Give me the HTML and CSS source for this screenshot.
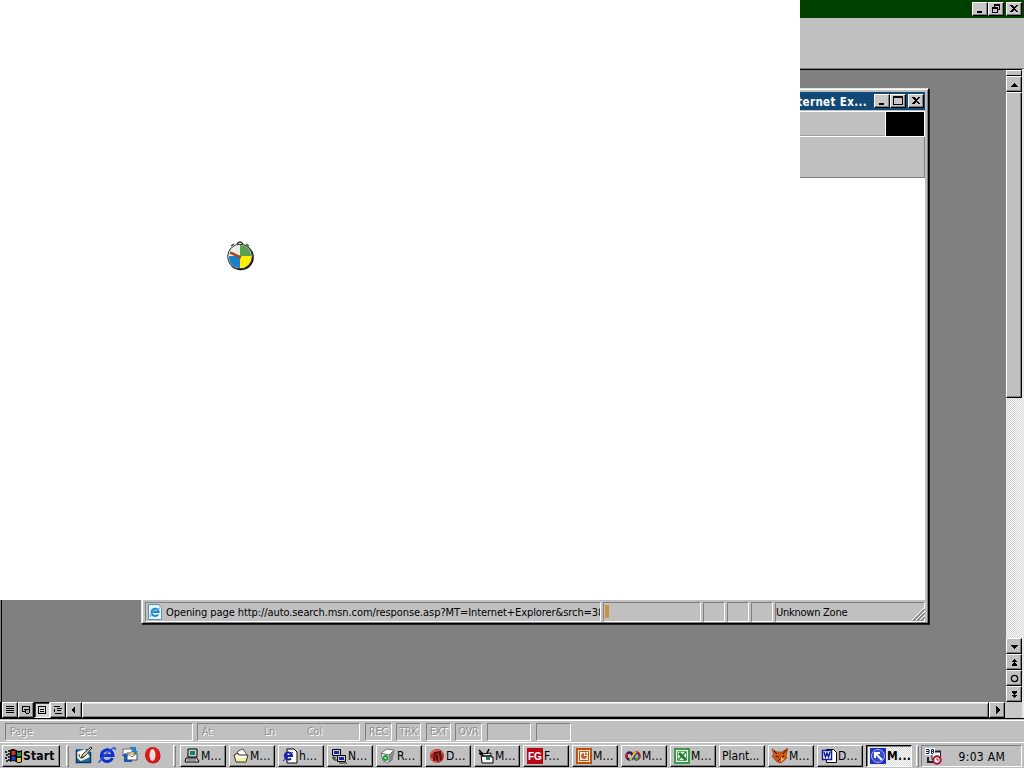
FILE: index.html
```html
<!DOCTYPE html>
<html lang="en">
<head>
    <meta charset="UTF-8">
    <title>Desktop</title>
    <link rel="stylesheet" href="styles.css">
</head>
<body>

<div class="desktop">
    <!-- Main window title bar -->
    <div class="titlebar">
        <div class="btn"><svg width="10" height="10"><path d="M2 8h5" stroke="#000" stroke-width="2"/></svg></div>
        <div class="btn"><svg width="10" height="10"><path d="M3 0h6v6H7V5h1V2H4v1H3zM1 3h6v6H1zM2 5v3h4V5z" fill-rule="evenodd"/></svg></div>
        <div class="btn close"><svg width="10" height="10"><path d="M1 1h2l2 2 2-2h2L6 4.500 9 8H7L5 6 3 8H1l3-3.500z"/></svg></div>
    </div>
    <div class="toolbar"></div>

    <div class="workspace">
        <div class="canvas"></div>
        <div class="vscroll">
            <div class="split"></div>
            <div class="arrow"><svg width="9" height="9"><path d="M0 7h8L4 3z"/></svg></div>
            <div class="vthumb"></div>
            <div class="vtrack"></div>
            <div class="arrow"><svg width="9" height="9"><path d="M0 3h8L4 7z"/></svg></div>
            <div class="arrow"><svg width="9" height="9"><path d="M2 4h5L4.500 1zM2 7h5L4.500 4zM2 7h5v1H2z"/></svg></div>
            <div class="arrow"><svg class="smooth" width="9" height="9"><circle cx="4.500" cy="4.500" r="3.200" fill="none" stroke="#000" stroke-width="1.300"/></svg></div>
            <div class="arrow"><svg width="9" height="9"><path d="M2 1h5v1H2zM2 2h5L4.500 5zM2 5h5L4.500 8z"/></svg></div>
        </div>
    </div>

    <div class="hscroll">
        <div class="view"><svg width="10" height="10"><path d="M1 1.500h8M1 3.500h8M1 5.500h8M1 7.500h8" stroke="#000"/></svg></div>
        <div class="view"><svg width="10" height="10"><path d="M1.500 1.500h7v5h-7zM3 4h3" fill="none" stroke="#000"/><circle cx="6.500" cy="6.500" r="2" fill="#aaa" stroke="#000"/></svg></div>
        <div class="view pressed"><svg width="10" height="10"><path d="M1.500 1.500h7v7h-7zM3 4.500h4M3 6.500h4" fill="none" stroke="#000"/></svg></div>
        <div class="view"><svg width="10" height="10"><path d="M1 1.500h6M4 3.500h5M4 5.500h4M2 8.500h7M1.500 4v3" stroke="#000"/></svg></div>
        <div class="view left"><svg width="9" height="9"><path d="M6 0v8L2 4z"/></svg></div>
        <div class="hthumb"></div>
        <div class="view last"><svg width="9" height="9"><path d="M3 0v8l4-4z"/></svg></div>
        <div class="corner"></div>
    </div>

    <!-- Word status bar -->
    <div class="statusbar">
        <div class="cell page"><span class="c-page">Page</span><span>Sec</span></div>
        <div class="cell pos"><span class="c-at">At</span><span class="c-ln">Ln</span><span>Col</span></div>
        <div class="cell mode m1">REC</div>
        <div class="cell mode m2">TRK</div>
        <div class="cell mode m3">EXT</div>
        <div class="cell mode m4">OVR</div>
        <div class="cell e1"></div>
        <div class="cell e2"></div>
    </div>

    <!-- Taskbar -->
    <div class="taskbar">
        <div class="start">
            <svg width="18" height="16" viewBox="0 0 18 16"><path d="M0 4h2M1 7h2M0 10h2M1 13h2M3 3h2M3 6h2M3 9h2M3 12h2" stroke="#000" stroke-width="1.500"/><path d="M5 2q3-2 6 0t6 0v12q-3 2-6 0t-6 0z" fill="#000"/><path d="M6.500 3q2-1 4 .3v4q-2-1-4 0z" fill="#e03020"/><path d="M12 4q2 1 4 0v4q-2 1-4 0z" fill="#20a040"/><path d="M6.500 8.500q2-1 4 .3v4q-2-1-4 0z" fill="#2040d0"/><path d="M12 9.500q2 1 4 0v4q-2 1-4 0z" fill="#f0d020"/></svg>
            <span>Start</span>
        </div>
        <div class="grip g1"></div>
        <div class="quick">
            <svg width="18" height="18" viewBox="0 0 18 18"><path d="M1 3h14v13H1z" fill="#2070a8"/><path d="M2 6l8-3 5 8-9 4-4-3z" fill="#fffbe8"/><path d="M1.500 4v12.500h14V6" fill="none" stroke="#103858" stroke-width="1.500"/><path d="M6 12l2-4 8-7 1 1-7 8z" fill="#e8e0c0" stroke="#222"/><path d="M4 8q0 6 5 3" fill="none" stroke="#333"/></svg>
            <svg width="18" height="18" viewBox="0 0 18 18"><path d="M14.500 12A5.800 5.800 0 1 1 15 9.500H5" fill="none" stroke="#1030d0" stroke-width="3"/><path d="M2 15C-1 19 4 12 9 7s9-7 8-3" fill="none" stroke="#2850e0" stroke-width="1.500"/></svg>
            <svg width="18" height="18" viewBox="0 0 18 18"><path d="M2 3h9v7H2z" fill="#fff" stroke="#667"/><path d="M6 7h10v7H6z" fill="#fff" stroke="#445"/><path d="M6 7l5 4 5-4" fill="none" stroke="#778"/><path d="M9 1h6v4h2l-3 4-4-4h2V3H9z" fill="#2080d0"/><path d="M1 10l3-3 4 3H6v4h5v2H3v-6z" fill="#1858b0"/><path d="M10 6h3v3h-3z" fill="#f0c030"/></svg>
            <svg width="18" height="18" viewBox="0 0 18 18"><ellipse cx="9" cy="9.500" rx="7.500" ry="8" fill="#a00808"/><ellipse cx="8.500" cy="9" rx="7.500" ry="8" fill="#e01818"/><ellipse cx="8.500" cy="9" rx="3" ry="6" fill="#e0e0e0"/></svg>
        </div>
        <div class="grip g2"></div>
        <div class="tasks">
            <div class="task"><svg width="16" height="16"><path d="M4 1h9v8H4z" fill="#ccc" stroke="#000"/><path d="M6 3h5v4H6z" fill="#108070"/><path d="M2 10h11l2 4H1z" fill="#ddd" stroke="#000"/><path d="M3 12h9" stroke="#555"/></svg>M...</div>
            <div class="task"><svg width="16" height="16"><path d="M3 7l2-4 5-2 4 6" fill="#fff" stroke="#555"/><path d="M1 7l4-2 1 2h9l-2 7H3z" fill="#f8f0a0" stroke="#333"/><path d="M3 9h10" stroke="#fff" stroke-width="2"/></svg>M...</div>
            <div class="task"><svg width="16" height="16"><path d="M5 1h7l3 3v11H5z" fill="#fff" stroke="#000"/><path d="M9 10.500A3.600 3.600 0 1 1 10 8H4" fill="none" stroke="#1020b0" stroke-width="2"/><path d="M1 13L11 4" stroke="#1020b0"/></svg>h...</div>
            <div class="task"><svg width="16" height="16"><path d="M1.500 1.500h8v6h-8zM6.500 7.500h8v6h-8z" fill="#ccc" stroke="#000"/><path d="M3 3h5v3H3zM8 9h5v3H8z" fill="#1030a0"/><path d="M1 10h4M3 8v4h3M8 15h8" stroke="#222" fill="none"/></svg>N...</div>
            <div class="task"><svg width="16" height="16"><path d="M1 5l8 2 5-5-2 10-4 3-5-2z" fill="#e8ece8" stroke="#777"/><path d="M1 5l6-4 7 1-5 5z" fill="#fff" stroke="#777"/><path d="M9 7l-1 8 4-3 2-10z" fill="#888"/><circle cx="5.500" cy="10" r="2" fill="none" stroke="#10a030" stroke-width="1.800"/></svg>R...</div>
            <div class="task"><svg width="16" height="16"><circle cx="8" cy="8" r="7" fill="#b03028"/><path d="M2 5q5-5 11 0M2 10q2 4 6 4" fill="none" stroke="#d86858" stroke-width="2"/><path d="M5 13l1-8 5-1 1 8M8 7v6" fill="none" stroke="#601010" stroke-width="2"/></svg>D...</div>
            <div class="task"><svg width="16" height="16"><path d="M3 6l10-1v4h2v6H4z" fill="#f4f4f4" stroke="#000"/><path d="M1 2l4 4M1 5l4 2M9 5l2-4M4 8h9" stroke="#000" stroke-width="1.500"/><path d="M8 9h4v3H8z" fill="#208070"/></svg>M...</div>
            <div class="task"><svg class="fg" width="16" height="16"><path d="M0 0h16v16H0z" fill="#b80818"/><text x="1" y="12">FG</text></svg>F...</div>
            <div class="task"><svg width="16" height="16"><path d="M1 1h14v14H1z" fill="#fff0e0" stroke="#c05010" stroke-width="2"/><path d="M3.500 3.500h9v9h-9z" fill="none" stroke="#c05010"/><path d="M8 5a3 3 0 1 0 3 3H8zM9 4v3h3" fill="#d06020"/></svg>M...</div>
            <div class="task"><svg width="16" height="16"><ellipse cx="4.500" cy="8" rx="3" ry="3.500" fill="none" stroke="#202060" stroke-width="2.500"/><ellipse cx="11.500" cy="8" rx="3" ry="3.500" fill="none" stroke="#a02020" stroke-width="2.500"/><path d="M2 5q-1 3 0 5" fill="none" stroke="#d02020" stroke-width="2"/><path d="M5 12l6-8" stroke="#f0c020" stroke-width="2.500"/><path d="M7 12l5-7" stroke="#2050c0" stroke-width="1.500"/><path d="M10 11.500q3 0 4-3" fill="none" stroke="#20a040" stroke-width="2"/></svg>M...</div>
            <div class="task"><svg width="16" height="16"><path d="M1 1h14v14H1z" fill="#e8f8e8" stroke="#409850" stroke-width="2"/><path d="M3.500 3.500h9v9h-9z" fill="none" stroke="#60a860"/><path d="M5 5l7 7" stroke="#208030" stroke-width="3"/><path d="M12 4l-8 8" stroke="#208030" stroke-width="1.500"/></svg>M...</div>
            <div class="task plain">Plant...</div>
            <div class="task"><svg width="16" height="16"><path d="M0 1l5 3h5l6-4-2 8 1 2-6 5-4-1-5-6 2-1z" fill="#d05810" stroke="#803000" stroke-width=".6"/><path d="M2 3l3 3M14 2l-3 4M4 8l3 1M12 8l-2 1M6 13l3-3" stroke="#301000"/><path d="M9 9l3 2-3 3z" fill="#ffc060"/></svg>M...</div>
            <div class="task"><svg width="16" height="16"><path d="M5.500 1.500h7l3 3v10h-10z" fill="#fff" stroke="#000"/><path d="M1.500 2.500h9v9h-9z" fill="#fff" stroke="#102090" stroke-width="1.500"/><path d="M3 4l1.500 5L6 5l1.500 4L9 4" fill="none" stroke="#102090" stroke-width="1.500"/></svg>D...</div>
            <div class="task active"><svg width="16" height="16"><path d="M0 0h16v16H0z" fill="#2030c0"/><circle cx="8" cy="8" r="6.500" fill="#3048d0" stroke="#aab4f0"/><path d="M12 12L5 5M5 10V5h5" fill="none" stroke="#fff" stroke-width="2"/></svg>M...</div>
        </div>
        <div class="grip g3"></div>
        <div class="tray">
            <svg width="17" height="17"><path d="M0 0h10v7H0z" fill="#fff"/><path d="M1 1.500h3v4H1M1 3.500h3M6.500 1.500h2v4h-2zM6 3.500h3" fill="none" stroke="#102060"/><path d="M10 3.500h5.500v8H7V7" fill="#fff" stroke="#222"/><path d="M10 3.500h6M3 9v5h6" stroke="#222" stroke-width="2" fill="none"/><circle cx="12" cy="12" r="3.700" fill="#fff" stroke="#b01030" stroke-width="2"/><path d="M12 10v2h2" fill="none" stroke="#b01030"/></svg>
            <span>9:03 AM</span>
        </div>
    </div>
</div>

<!-- Internet Explorer window -->
<div class="ie">
    <div class="ie-title">
        <span>Internet Ex...</span>
        <div class="btn"><svg width="10" height="10"><path d="M2 8h5" stroke="#000" stroke-width="2"/></svg></div>
        <div class="btn"><svg width="10" height="10"><path d="M0 0h10v9H0zM1 2v6h8V2z" fill-rule="evenodd"/></svg></div>
        <div class="btn close"><svg width="10" height="10"><path d="M1 1h2l2 2 2-2h2L6 4.500 9 8H7L5 6 3 8H1l3-3.500z"/></svg></div>
    </div>
    <div class="ie-menu"><div class="throbber"></div></div>
    <div class="ie-tools"></div>
    <div class="ie-page"></div>
    <div class="ie-status">
        <div class="pane msg">
            <svg width="16" height="16"><path d="M1.500.5h10l3 3v12h-13z" fill="#e8f4fc" stroke="#5890b8"/><path d="M11 10.500A3.600 3.600 0 1 1 11.700 8H5" fill="none" stroke="#2088c8" stroke-width="2"/><path d="M3 13q1-6 10-9" fill="none" stroke="#50b0e0"/></svg>
            <span>Opening page http://auto.search.msn.com/response.asp?MT=Internet+Explorer&amp;srch=38</span>
        </div>
        <div class="pane progress"><i></i></div>
        <div class="pane small"></div>
        <div class="pane small"></div>
        <div class="pane small"></div>
        <div class="pane zone">Unknown Zone</div>
        <svg class="sizegrip" width="13" height="13"><path d="M1 13L13 1M5 13l8-8M9 13l4-4" stroke="#808080" stroke-width="1.500"/><path d="M0 12L12 0M4 12l8-8M8 12l4-4" stroke="#fff"/></svg>
    </div>
</div>

<!-- Blank splash area with the busy cursor -->
<div class="splash">
    <svg class="busy" width="30" height="32" viewBox="0 0 30 32">
        <path d="M6 6l3-2M21 4l3 2M12 4q3-4 6 0" fill="none" stroke="#444" stroke-width="1.500"/>
        <circle cx="15.800" cy="17.300" r="13" fill="#111"/>
        <circle cx="15" cy="16.500" r="12.300" fill="#e4e8e0" stroke="#333"/>
        <path d="M15 16V5a11 11 0 0 1 11 11z" fill="#58a050"/>
        <path d="M15 16h11a11 11 0 0 1-11 12z" fill="#ffee00"/>
        <path d="M15 16v12A11 11 0 0 1 4 16z" fill="#1880c8"/>
        <path d="M15 16H4A11 11 0 0 1 15 5z" fill="#e8eee8"/>
        <path d="M16 17.500L5 12.500" stroke="#a84818" stroke-width="2.500"/>
    </svg>
</div>

</body>
</html>
```
FILE: styles.css
```css
* {
    box-sizing: border-box;
}
body {
    margin: 0;
    width: 1024px;
    height: 768px;
    overflow: hidden;
    position: relative;
    background: #c0c0c0;
    font-family: "DejaVu Sans Condensed", "DejaVu Sans", sans-serif;
    font-size: 11px;
    color: #000;
}
svg {
    display: block;
    flex: none;
}
.desktop {
    display: flex;
    flex-direction: column;
    height: 768px;
}

/* title bar buttons */
.titlebar {
    height: 18px;
    background: #004000;
    display: flex;
    justify-content: flex-end;
    padding: 2px 2px 0 0;
}
.btn {
    width: 16px;
    height: 14px;
    background: #c8c8c8;
    border: 1px solid;
    border-color: #fff #000 #000 #fff;
    box-shadow: inset -1px -1px #808080;
    padding: 1px 2px;
}
.btn svg, .arrow svg, .view svg {
    shape-rendering: crispEdges;
}
.arrow svg.smooth {
    shape-rendering: auto;
}
.btn.close {
    margin-left: 2px;
}
.toolbar {
    height: 51px;
    background: #c0c0c0;
    border-bottom: 1px solid #808080;
}

/* document area */
.workspace {
    height: 633px;
    display: flex;
    padding-right: 2px;
    background: #e8e8e8;
}
.canvas {
    flex: 1;
    background: #808080;
    border-left: 1px solid #808080;
    border-top: 1px solid #000;
    box-shadow: inset 1px 0 #000;
}
.vscroll {
    width: 16px;
    display: flex;
    flex-direction: column;
    border-top: 1px solid #000;
}
.split, .arrow, .vthumb, .view, .hthumb {
    background: #c0c0c0;
    border: 1px solid;
    border-color: #fff #000 #000 #fff;
}
.split {
    height: 6px;
}
.arrow {
    height: 16px;
    display: flex;
    align-items: center;
    justify-content: center;
    box-shadow: inset -1px -1px #808080;
}
.vthumb {
    height: 306px;
    box-shadow: inset -1px -1px #808080;
}
.vtrack {
    flex: 1;
    background: repeating-conic-gradient(#fff 0 25%, #d0d0d0 0 50%) 0 0 / 2px 2px;
}
.hscroll {
    height: 17px;
    display: flex;
    padding-left: 2px;
    border-bottom: 1px solid #000;
    box-shadow: inset 2px 0 #000;
}
.view {
    width: 16px;
    display: flex;
    align-items: center;
    justify-content: center;
    box-shadow: inset -1px -1px #808080;
}
.view.left {
    padding-right: 2px;
}
.view.pressed {
    border-color: #000 #fff #fff #000;
    box-shadow: inset 1px 1px #404040;
    background: #d8d8d8;
}
.hthumb {
    flex: 1;
    border-top-color: #fff;
    box-shadow: inset 0 1px #e0e0e0, inset -1px -1px #808080;
}
.corner {
    width: 19px;
    background: #c8c8c8;
    border-right: 2px solid #e8e8e8;
}

/* status bar */
.statusbar {
    height: 22px;
    margin-top: 1px;
    border-top: 1px solid #fff;
    display: flex;
    padding: 2px 0 1px 5px;
    color: #909090;
    text-shadow: 1px 1px #fff;
    font-size: 10.500px;
}
.cell {
    border: 1px solid;
    border-color: #808080 #fff #fff #808080;
    height: 18px;
    line-height: 15px;
    display: flex;
}
.page {
    width: 188px;
    padding-left: 4px;
}
.c-page {
    width: 69px;
}
.pos {
    width: 163px;
    margin-left: 4px;
    padding-left: 4px;
}
.c-at {
    width: 62px;
}
.c-ln {
    width: 43px;
}
.mode {
    width: 27px;
    margin-left: 4px;
    justify-content: center;
    letter-spacing: -0.100px;
}
.m1, .m3 {
    margin-left: 5px;
}
.m2, .m3 {
    width: 25px;
}
.e1 {
    width: 44px;
    margin-left: 5px;
}
.e2 {
    width: 35px;
    margin-left: 5px;
}

/* taskbar */
.taskbar {
    flex: 1;
    border-top: 1px solid #fff;
    display: flex;
    padding: 2px 2px 0;
}
.start {
    width: 58px;
    height: 22px;
    border: 1px solid;
    border-color: #fff #000 #000 #fff;
    box-shadow: inset -1px -1px #808080;
    display: flex;
    align-items: center;
    padding-left: 2px;
    font-weight: bold;
    font-size: 12px;
    letter-spacing: 0.200px;
}
.grip {
    width: 3px;
    height: 22px;
    border: 1px solid;
    border-color: #fff #808080 #808080 #fff;
}
.g1 {
    margin-left: 6px;
}
.quick {
    display: flex;
    gap: 5px;
    padding: 1px 0 0 6px;
    width: 102px;
}
.g2 {
    margin-left: 2px;
}
.tasks {
    display: flex;
    gap: 3px;
    margin-left: 4px;
}
.task {
    width: 46px;
    height: 22px;
    border: 1px solid;
    border-color: #fff #000 #000 #fff;
    box-shadow: inset -1px -1px #808080;
    display: flex;
    align-items: center;
    padding-left: 3px;
    font-size: 12px;
    white-space: nowrap;
    letter-spacing: 0.300px;
}
.task svg {
    margin-right: 1px;
}
.task.plain {
    padding-left: 2px;
    letter-spacing: 0;
}
.task.active {
    border-color: #000 #fff #fff #000;
    box-shadow: inset 1px 1px #808080;
    background: repeating-conic-gradient(#fff 0 25%, #d8d8d8 0 50%) 0 0 / 2px 2px;
    font-weight: bold;
}
.fg text {
    font: bold 10px "Liberation Sans", sans-serif;
    letter-spacing: 0;
    fill: #fff;
}
.g3 {
    margin-left: 4px;
}
.tray {
    flex: 1;
    height: 22px;
    margin-left: 2px;
    border: 1px solid;
    border-color: #808080 #fff #fff #808080;
    display: flex;
    align-items: center;
    justify-content: space-between;
    padding: 0 16px 0 3px;
    font-size: 12px;
    letter-spacing: 0.300px;
}
.tray span {
    padding-top: 1px;
}

/* IE window */
.ie {
    position: absolute;
    left: 141px;
    top: 88px;
    width: 788px;
    height: 536px;
    background: #c0c0c0;
    border: 1px solid;
    border-color: #e0e0e0 #000 #000 #e0e0e0;
    box-shadow: inset 1px 1px #fff, inset -1px -1px #808080, 1px 1px #202020;
    padding: 3px 3px 1px;
    display: flex;
    flex-direction: column;
}
.ie-title {
    height: 18px;
    background: #104878;
    display: flex;
    align-items: flex-start;
    justify-content: flex-end;
    padding: 2px 1px 0 0;
    color: #fff;
    font-weight: bold;
}
.ie-title span {
    margin-right: 7px;
    line-height: 16px;
    font-size: 11.500px;
    letter-spacing: 0.350px;
}
.ie-menu {
    height: 26px;
    border-top: 1px solid #fff;
    border-bottom: 1px solid #fff;
    border-right: 1px solid #fff;
    margin-top: 1px;
    display: flex;
    justify-content: flex-end;
    box-shadow: inset 0 -1px #a0a0a0;
}
.throbber {
    width: 39px;
    background: #000;
    border-left: 1px solid #fff;
}
.ie-tools {
    height: 41px;
    border-right: 1px solid #808080;
    border-bottom: 1px solid #808080;
}
.ie-page {
    flex: 1;
    background: #fff;
}
.ie-status {
    height: 22px;
    display: flex;
    gap: 2px;
    padding-top: 2px;
    position: relative;
}
.pane {
    height: 20px;
    border: 1px solid;
    border-color: #808080 #fff #fff #808080;
    line-height: 19px;
    white-space: nowrap;
    overflow: hidden;
}
.msg {
    width: 456px;
    display: flex;
    padding: 1px 0 0 1px;
}
.msg span {
    margin: -1px 0 0 3px;
    letter-spacing: -0.080px;
}
.progress {
    width: 98px;
    padding: 2px 1px;
}
.progress i {
    display: block;
    width: 4px;
    height: 13px;
    background: #d09040;
}
.small {
    width: 22px;
}
.zone {
    flex: 1;
    letter-spacing: -0.250px;
}
.sizegrip {
    position: absolute;
    right: 0;
    bottom: 1px;
}

/* splash */
.splash {
    position: absolute;
    left: 0;
    top: 0;
    width: 800px;
    height: 600px;
    background: #fff;
}
.busy {
    position: absolute;
    left: 225px;
    top: 240px;
}
```
